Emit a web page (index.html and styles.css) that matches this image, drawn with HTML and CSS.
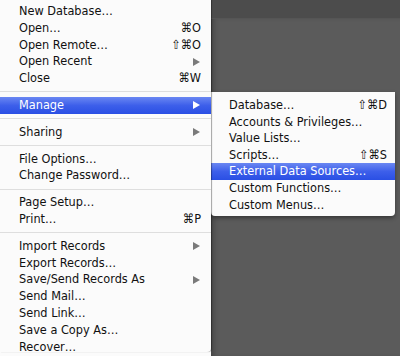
FILE: index.html
```html
<!DOCTYPE html>
<html>
<head>
<meta charset="utf-8">
<link rel="stylesheet" href="styles.css">
</head>
<body>
<div class="screen">
  <div class="menu">
    <div class="item">New Database…</div>
    <div class="item"><span>Open…</span><span class="key">⌘O</span></div>
    <div class="item"><span>Open Remote…</span><span class="key">⇧⌘O</span></div>
    <div class="item"><span>Open Recent</span><span class="arrow"></span></div>
    <div class="item"><span>Close</span><span class="key">⌘W</span></div>
    <div class="sep"></div>
    <div class="item active"><span>Manage</span><span class="arrow"></span></div>
    <div class="sep"></div>
    <div class="item"><span>Sharing</span><span class="arrow"></span></div>
    <div class="sep"></div>
    <div class="item">File Options…</div>
    <div class="item">Change Password…</div>
    <div class="sep"></div>
    <div class="item">Page Setup…</div>
    <div class="item"><span>Print…</span><span class="key">⌘P</span></div>
    <div class="sep"></div>
    <div class="item"><span>Import Records</span><span class="arrow"></span></div>
    <div class="item">Export Records…</div>
    <div class="item"><span>Save/Send Records As</span><span class="arrow"></span></div>
    <div class="item">Send Mail…</div>
    <div class="item">Send Link…</div>
    <div class="item">Save a Copy As…</div>
    <div class="item">Recover…</div>
  </div>
  <div class="desk">
    <div class="band"></div>
    <div class="area">
      <div class="submenu">
        <div class="item"><span>Database…</span><span class="key">⇧⌘D</span></div>
        <div class="item">Accounts &amp; Privileges…</div>
        <div class="item">Value Lists…</div>
        <div class="item"><span>Scripts…</span><span class="key">⇧⌘S</span></div>
        <div class="item active">External Data Sources…</div>
        <div class="item">Custom Functions…</div>
        <div class="item">Custom Menus…</div>
      </div>
    </div>
  </div>
</div>
</body>
</html>
```

FILE: styles.css
```css
html, body {
  margin: 0;
  padding: 0;
  background: #fbfbfb;
}
.screen {
  display: flex;
  width: 400px;
  height: 356px;
  overflow: hidden;
  font-family: "DejaVu Sans Condensed", "DejaVu Sans", "Liberation Sans", sans-serif;
  font-stretch: semi-condensed;
  font-size: 12.6px;
  color: #111;
}
.menu {
  width: 211px;
  height: 352px;
  padding-top: 3px;
  box-sizing: border-box;
  background: #fbfbfb;
  border-bottom-right-radius: 4px;
  box-shadow: 1px 0 1px rgba(0,0,0,0.35);
  flex: none;
  position: relative;
  z-index: 1;
}
.item {
  height: 16.8px;
  line-height: 16.8px;
  padding: 0 10px 0 19px;
  display: flex;
  justify-content: space-between;
  align-items: center;
  white-space: nowrap;
}
.arrow {
  width: 0;
  height: 0;
  border-top: 4.5px solid transparent;
  border-bottom: 4.5px solid transparent;
  border-left: 7px solid #7a7a7a;
  margin-right: 1px;
}
.item.active {
  background: linear-gradient(#6a87f2, #3d5fea 50%, #2a4fe4);
  color: #fff;
}
.item.active .arrow {
  border-left-color: #fff;
}
.sep {
  height: 10px;
  display: flex;
  align-items: center;
}
.sep::before {
  content: "";
  flex: 1;
  height: 1px;
  background: #dedede;
}
.desk {
  flex: 1;
  display: flex;
  flex-direction: column;
  background: #5b5b5b;
}
.band {
  height: 18px;
  background: #4c4c4c;
  border-bottom: 1px solid #555;
  flex: none;
}
.area {
  flex: 1;
  padding-top: 73px;
  box-shadow: inset 6px 0 6px -4px rgba(0,0,0,0.3);
}
.submenu {
  width: 184px;
  padding: 5px 0 3px;
  background: #fbfbfb;
  border-radius: 0 0 4px 4px;
  box-shadow: 0 2px 4px rgba(0,0,0,0.4);
}
.submenu .item {
  padding: 0 8px 0 18px;
  height: 16.6px;
  line-height: 16.6px;
}
```
